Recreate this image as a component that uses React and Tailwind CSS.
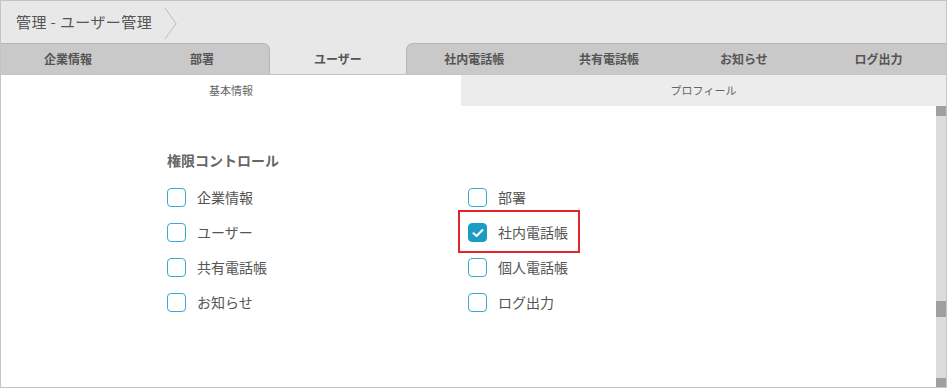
import React, { useState } from 'react';

const tabs = ["企業情報", "部署", "ユーザー", "社内電話帳", "共有電話帳", "お知らせ", "ログ出力"];

const perms = [
  ["企業情報", "部署"],
  ["ユーザー", "社内電話帳"],
  ["共有電話帳", "個人電話帳"],
  ["お知らせ", "ログ出力"],
];

const CheckBox = ({ checked }) => (
  <span
    className={
      "flex items-center justify-center w-[19px] h-[19px] rounded-[4px] border-[1.5px] " +
      (checked ? "bg-[#1b9dc3] border-[#1b9dc3]" : "bg-white border-[#3aaccb]")
    }
  >
    {checked && (
      <svg width="12" height="10" viewBox="0 0 12 10">
        <polyline points="1.5,5.2 4.6,8 10.5,2" fill="none" stroke="white" strokeWidth="2" strokeLinecap="round" strokeLinejoin="round" />
      </svg>
    )}
  </span>
);

const Perm = ({ label, checked, highlight }) => (
  <div className="relative flex items-center h-[35px] w-[301px]">
    <CheckBox checked={checked} />
    <span className="ml-[11px] text-[14px] text-[#555]">{label}</span>
    {highlight && (
      <div className="absolute left-[-10px] top-[-5px] w-[122px] h-[43px] border-2 border-[#e3242b]" />
    )}
  </div>
);

const App = () => {
  const [checked] = useState({ "社内電話帳": true });

  return (
    <div
      className="w-[947px] h-[388px] border border-[#c4c4c4] bg-white flex flex-col overflow-hidden"
      style={{ fontFamily: '"Noto Sans CJK JP", "Noto Sans", sans-serif' }}
    >
      {/* breadcrumb */}
      <div className="h-[42px] bg-[#e8e8e8] flex items-center shrink-0">
        <span className="ml-[15px] text-[15px] text-[#555] tracking-[0.4px]">管理 - ユーザー管理</span>
        <svg className="ml-[12px] mt-[2px]" width="13" height="33" viewBox="0 0 13 33">
          <polyline points="1,1 12,16.5 1,32" fill="none" stroke="#bcbcbc" strokeWidth="1" />
        </svg>
      </div>

      {/* main tabs */}
      <div className="h-[32px] bg-[#e8e8e8] flex border-b border-[#c4c4c4] shrink-0">
        <div className="w-[269px] flex bg-[#c9c9c9] border-t border-r border-[#b6b6b6] rounded-tr-[7px]">
          {tabs.slice(0, 2).map((t) => (
            <div key={t} className="flex-1 flex items-center justify-center text-[12px] font-bold text-[#555]">{t}</div>
          ))}
        </div>
        <div className="w-[136px] flex items-center justify-center text-[12px] font-bold text-[#555]">{tabs[2]}</div>
        <div className="flex-1 flex bg-[#c9c9c9] border-t border-l border-[#b6b6b6] rounded-tl-[7px]">
          {tabs.slice(3).map((t) => (
            <div key={t} className="flex-1 flex items-center justify-center text-[12px] font-bold text-[#555]">{t}</div>
          ))}
        </div>
      </div>

      {/* sub tabs */}
      <div className="h-[31px] flex shrink-0">
        <div className="w-[460px] bg-white flex items-center justify-center text-[11px] text-[#666]">基本情報</div>
        <div className="flex-1 bg-[#ececec] flex items-center justify-center text-[11px] text-[#666]">プロフィール</div>
      </div>

      {/* body */}
      <div className="flex-1 flex">
        <div className="flex-1 pt-[44px] pl-[166px]">
          <h3 className="text-[14px] leading-[20px] font-bold text-[#666]">権限コントロール</h3>
          <div className="mt-[10px]">
            {perms.map((row, i) => (
              <div key={i} className="flex">
                {row.map((p) => (
                  <Perm key={p} label={p} checked={!!checked[p]} highlight={p === "社内電話帳"} />
                ))}
              </div>
            ))}
          </div>
        </div>
        {/* scrollbar */}
        <div className="w-[10px] bg-[#dcdcdc] flex flex-col">
          <div className="h-[10px] bg-[#a0a0a0]" />
          <div className="h-[185px]" />
          <div className="h-[16px] bg-[#a0a0a0]" />
          <div className="flex-1" />
          <div className="h-[9px] bg-[#a0a0a0]" />
        </div>
      </div>
    </div>
  );
};

export default App;
